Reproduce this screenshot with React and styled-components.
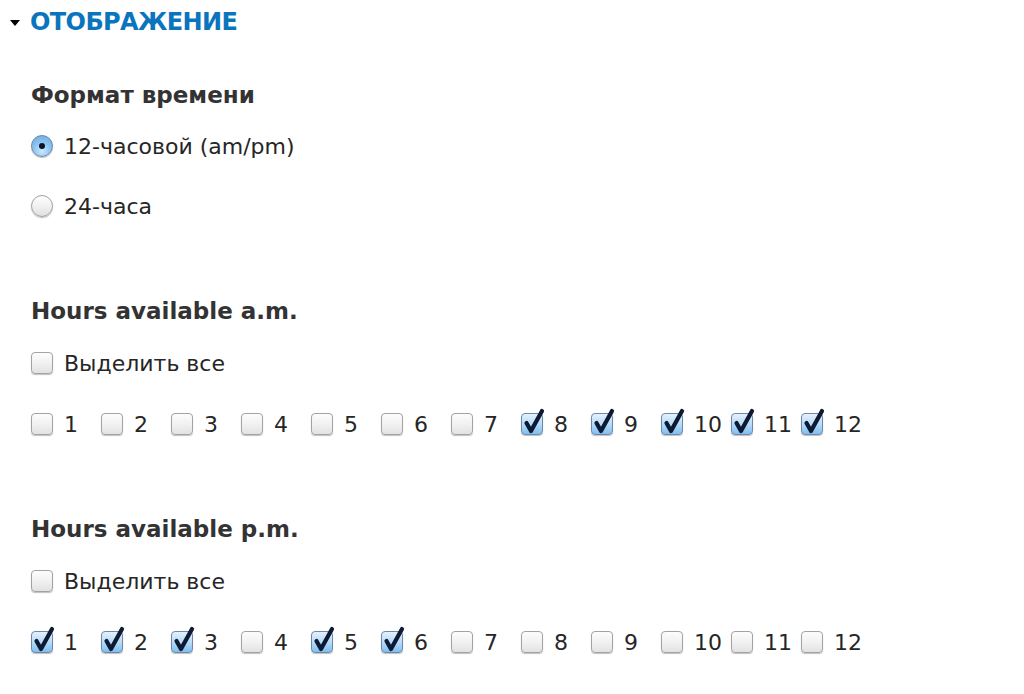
import React from "react";
import styled, { createGlobalStyle } from "styled-components";

const GlobalStyle = createGlobalStyle`
  body {
    margin: 0;
    background: #fff;
    font-family: "DejaVu Sans", "Liberation Sans", sans-serif;
    color: #2b2b2b;
  }
`;

const Page = styled.div`
  padding: 7px 0 0 10px;
`;

const Legend = styled.div`
  display: flex;
  align-items: center;
  height: 30px;
  gap: 10px;
  color: #0a74bd;
  font-size: 24px;
  font-weight: bold;
  letter-spacing: -0.6px;
`;

const Arrow = styled.span`
  width: 0;
  height: 0;
  border-left: 5.5px solid transparent;
  border-right: 5.5px solid transparent;
  border-top: 6px solid #000;
  margin-top: 2px;
`;

const Body = styled.div`
  padding: 43px 0 0 21px;
`;

const Section = styled.div`
  margin-bottom: 75px;

  &:last-child {
    margin-bottom: 0;
  }
`;

const Heading = styled.div`
  height: 30px;
  line-height: 30px;
  font-size: 23px;
  font-weight: bold;
  color: #333;
  margin-bottom: ${(p) => p.$space}px;
`;

const Options = styled.div`
  display: flex;
  flex-direction: column;
  gap: ${(p) => p.$gap}px;
`;

const Row = styled.div`
  display: flex;
  align-items: center;
  height: 30px;
`;

const Item = styled.label`
  display: flex;
  align-items: center;
  gap: 11px;
  width: ${(p) => (p.$fixed ? "70px" : "auto")};
  height: 30px;
  font-size: 22px;
  color: #262626;
  white-space: nowrap;
`;

const Box = styled.span`
  position: relative;
  flex: none;
  width: 22px;
  height: 22px;
  box-sizing: border-box;
  border-radius: 4px;
  border: 1px solid ${(p) => (p.$checked ? "#6f88a8" : "#a3a3a3")};
  background: ${(p) =>
    p.$checked
      ? "linear-gradient(#e4f1fc, #b9dcf8 50%, #7fbff0)"
      : "linear-gradient(#fdfdfd, #f1f1f1 50%, #e2e2e2)"};
  box-shadow: 0 1px 1px rgba(0, 0, 0, 0.25);
`;

const Check = styled.svg`
  position: absolute;
  left: 1px;
  top: -6px;
  overflow: visible;
`;

const Radio = styled.span`
  position: relative;
  flex: none;
  width: 22px;
  height: 22px;
  box-sizing: border-box;
  border-radius: 50%;
  border: 1px solid ${(p) => (p.$checked ? "#6f88a8" : "#a3a3a3")};
  background: ${(p) =>
    p.$checked
      ? "radial-gradient(circle at 50% 75%, #cde8fd, #8ec6f3 45%, #6aa9e0)"
      : "linear-gradient(#fdfdfd, #f1f1f1 50%, #e0e0e0)"};
  box-shadow: 0 1px 1px rgba(0, 0, 0, 0.25);

  &::after {
    content: "";
    display: ${(p) => (p.$checked ? "block" : "none")};
    position: absolute;
    left: 7px;
    top: 7px;
    width: 6px;
    height: 6px;
    border-radius: 50%;
    background: #0b1424;
  }
`;

const Checkbox = ({ checked }) => (
  <Box $checked={checked}>
    {checked && (
      <Check width="22" height="26" viewBox="0 0 22 26">
        <path
          d="M3.5 15 L8 23 L19 3"
          fill="none"
          stroke="#0c1a33"
          strokeWidth="4.2"
          strokeLinecap="round"
          strokeLinejoin="round"
        />
      </Check>
    )}
  </Box>
);

const HourGrid = ({ checked }) => (
  <Row>
    {Array.from({ length: 12 }, (_, i) => i + 1).map((h) => (
      <Item $fixed key={h}>
        <Checkbox checked={checked.includes(h)} />
        {h}
      </Item>
    ))}
  </Row>
);

const HoursSection = ({ title, checked }) => (
  <Section>
    <Heading $space={22}>{title}</Heading>
    <Options $gap={31}>
      <Row>
        <Item>
          <Checkbox checked={false} />
          Выделить все
        </Item>
      </Row>
      <HourGrid checked={checked} />
    </Options>
  </Section>
);

export default function App() {
  return (
    <Page>
      <GlobalStyle />
      <Legend>
        <Arrow />
        ОТОБРАЖЕНИЕ
      </Legend>
      <Body>
        <Section>
          <Heading $space={21}>Формат времени</Heading>
          <Options $gap={30}>
            <Row>
              <Item>
                <Radio $checked />
                12-часовой (am/pm)
              </Item>
            </Row>
            <Row>
              <Item>
                <Radio />
                24-часа
              </Item>
            </Row>
          </Options>
        </Section>
        <HoursSection title="Hours available a.m." checked={[8, 9, 10, 11, 12]} />
        <HoursSection title="Hours available p.m." checked={[1, 2, 3, 5, 6]} />
      </Body>
    </Page>
  );
}
